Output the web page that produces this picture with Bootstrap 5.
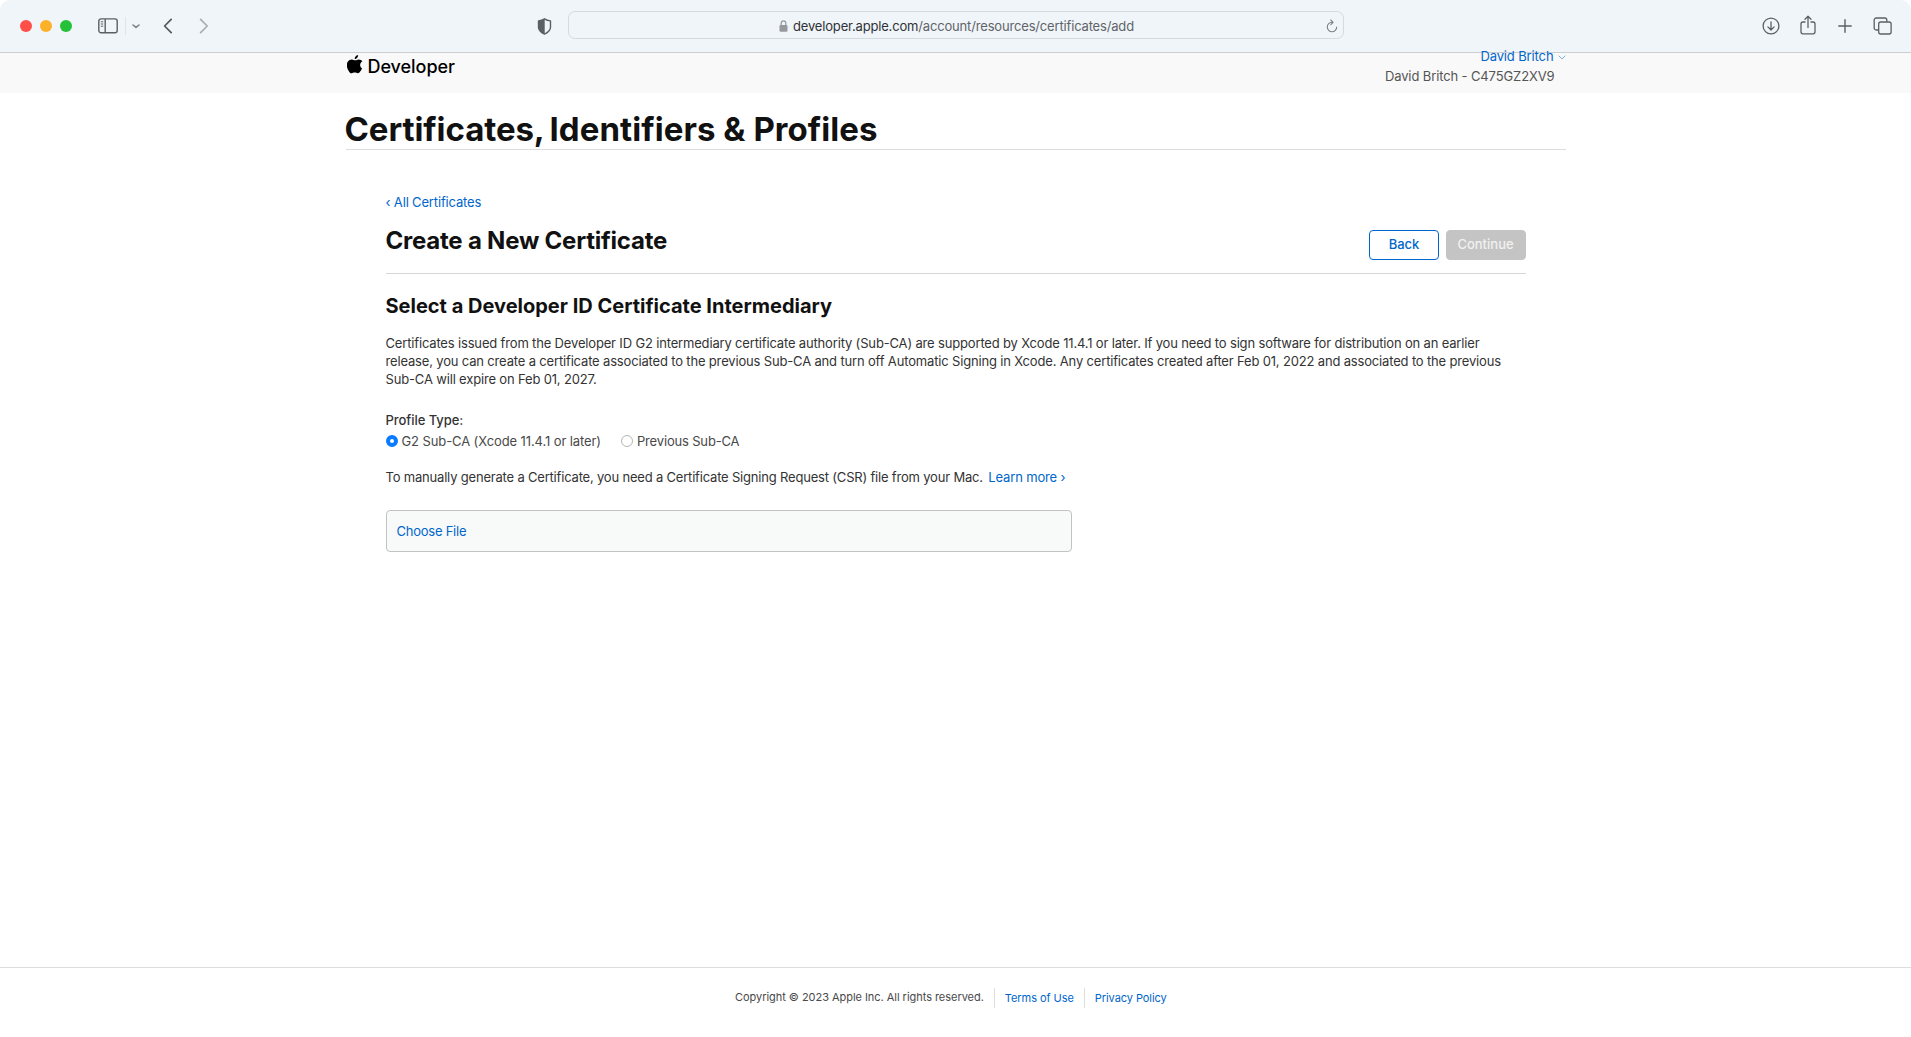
<!DOCTYPE html>
<html lang="en">
<head>
<meta charset="utf-8">
<meta name="viewport" content="width=device-width, initial-scale=1">
<title>Certificates, Identifiers &amp; Profiles</title>
<link href="https://cdn.jsdelivr.net/npm/bootstrap@5.3.0/dist/css/bootstrap.min.css" rel="stylesheet">
<style>
body{font-family:Inter,"Liberation Sans",sans-serif;font-size:13px;line-height:18px;letter-spacing:-.16px;color:#333;background:#fff;overflow:hidden}
svg{display:block;flex:none}
a{color:#06c;text-decoration:none}
.chrome{height:53px;background:#f0f5fa;border-bottom:1px solid #cbcdd0;border-radius:10px 10px 0 0;padding:0 19px 0 20px;color:#5b6065;display:grid;grid-template-columns:517px 15px 792px 1fr;align-items:center}
.tools-left{height:52px}
.light{width:12px;height:12px;border-radius:50%;margin-right:8px}
.light-red{background:#fe4f49}
.light-amber{background:#fdb128}
.light-green{background:#25c138}
.rule-v{width:1px;height:18px;background:#dfe4e9}
.address{height:28px;border:1px solid #d5dadf;border-radius:7px;margin-left:16px;margin-top:-2px;padding:0 5px 0 210px;color:#606468;letter-spacing:-.17px;line-height:26px}
.address b{font-weight:400;color:#2f3235}
.url{margin-left:5px;padding-top:2px}
.site-head{height:40px;background:#f9f9f9}
.wrap{width:1220px;margin:0 auto}
.brand-name{font-size:18px;font-weight:500;line-height:22px;letter-spacing:-.05px;color:#000;margin:1px 0 0 5px}
.account{margin-top:-7px;line-height:20px;color:#555;letter-spacing:-.12px}
.account-team{padding-right:11px}
.page-title{font-size:33px;line-height:40px;font-weight:700;letter-spacing:.06px;color:#111;padding-top:16px;margin:0 0 0 -1px}
.page-title span{letter-spacing:-.08px;word-spacing:-2px}
.main-rule{border-top:1px solid #ddd}
.panel{padding:43px 40px 0}
.head-row{margin-top:14px;height:49px;border-bottom:1px solid #d6d6d6}
.head-row h2{font-size:24px;line-height:30px;font-weight:700;letter-spacing:-.22px;color:#111;margin:1px 0 0}
.btn-act{height:30px;padding:0 0 1px;font-size:13px;line-height:27px;font-weight:500;border-radius:4px;margin-top:5px;letter-spacing:0}
.btn-back{width:70px;border:1px solid #06c;color:#06c;background:#fff;padding-left:1px}
.btn-next,.btn-next:disabled{width:80px;border:1px solid #c4c4c4;background:#c4c4c4;color:#f1f1f1;opacity:1}
.sub-title{font-size:20px;line-height:26px;font-weight:700;letter-spacing:0;color:#111;margin:19px 0 15px}
.intro{margin:0 0 23px;letter-spacing:-.164px}
.type-label{font-weight:500;letter-spacing:-.05px}
.choice{color:#494949;letter-spacing:-.1px;margin-top:3px}
.choice label:last-child{letter-spacing:-.17px}
.radio-dot.form-check-input{width:12px;height:12px;margin:0 4px 0 0;border:1px solid #b5b5b5;background:#fff;box-shadow:none;float:none}
.radio-dot.form-check-input:checked{border:4px solid #0a7aff;background:#fff}
.radio-dot.radio-second{margin-left:20px}
.csr{margin:18px 0 24px;letter-spacing:-.19px}
.csr a{letter-spacing:-.15px;margin-left:2px}
.drop{width:686px;height:42px;border:1px solid #c2c2c2;border-radius:4px;background:#f8faf9;padding-left:10px;letter-spacing:-.24px}
.foot{height:70px;border-top:1px solid #ddd;font-size:11px;line-height:18px;letter-spacing:-.04px;color:#494949;padding-left:735px;padding-top:20px}
.foot .rule-v{height:20px;background:#ddd}
.foot a{letter-spacing:-.06px;margin-top:1px}
</style>
<script src="https://cdn.jsdelivr.net/npm/bootstrap@5.3.0/dist/js/bootstrap.bundle.min.js"></script>
</head>
<body>
<div class="d-flex flex-column vh-100">
  <div class="chrome">
    <div class="tools-left d-flex align-items-center">
      <span class="light light-red"></span>
      <span class="light light-amber"></span>
      <span class="light light-green"></span>
      <svg style="margin-left:18px" width="20" height="16" viewBox="0 0 20 16" fill="none" stroke="#5b6065" stroke-width="1.4"><rect x=".8" y=".9" width="18.4" height="13.8" rx="2.2"/><path d="M7.2 1v13.6"/><path d="M2.8 3.8h2.4M2.8 6h2.4M2.8 8.2h2.4" stroke-width="1"/></svg>
      <span class="rule-v" style="margin-left:7px"></span>
      <svg style="margin-left:6px" width="8" height="5" viewBox="0 0 8 5" fill="none" stroke="#7d8287" stroke-width="1.6" stroke-linecap="round" stroke-linejoin="round"><path d="M1 1l3 2.4L7 1"/></svg>
      <svg style="margin-left:23px" width="10" height="16" viewBox="0 0 10 16" fill="none" stroke="#53585d" stroke-width="1.7" stroke-linecap="round" stroke-linejoin="round"><path d="M8.2 1.4L1.6 8l6.6 6.6"/></svg>
      <svg style="margin-left:26px" width="10" height="16" viewBox="0 0 10 16" fill="none" stroke="#a9adb2" stroke-width="1.7" stroke-linecap="round" stroke-linejoin="round"><path d="M1.6 1.4L8.2 8l-6.6 6.6"/></svg>
    </div>
    <svg width="15" height="17" viewBox="0 0 15 17"><path d="M7.5 .8C5.6 2 3.7 2.6 1.5 2.9v6.3c0 3.2 2.3 5.1 6 6.9 3.7-1.8 6-3.7 6-6.9V2.9C11.3 2.6 9.4 2 7.5 .8z" fill="none" stroke="#5b6065" stroke-width="1.4" stroke-linejoin="round"/><path d="M7.7 .8C5.6 2 3.7 2.6 1.5 2.9v6.3c0 3.2 2.3 5.1 6.2 6.9z" fill="#5b6065"/></svg>
    <div class="address d-flex align-items-center">
      <svg style="margin-top:2px" width="9" height="12" viewBox="0 0 9 12"><rect x=".5" y="5" width="8" height="6.8" rx="1.2" fill="#95999d"/><path d="M2.2 5.5V3.4a2.3 2.5 0 0 1 4.6 0v2.1" fill="none" stroke="#95999d" stroke-width="1.2"/></svg>
      <span class="url"><b>developer.apple.com</b>/account/resources/certificates/add</span>
      <svg class="ms-auto" style="margin-top:2px" width="12" height="14" viewBox="0 0 12 14" fill="none" stroke="#7d8185" stroke-width="1.1" stroke-linecap="round" stroke-linejoin="round"><path d="M6.5 3.3H6A4.7 4.7 0 1 0 10.7 8M4.8 1l2.3 2.3L4.8 5.6"/></svg>
    </div>
    <div class="d-flex align-items-center justify-content-end">
      <svg style="margin-right:20px" width="18" height="18" viewBox="0 0 18 18" fill="none" stroke="#5b6065" stroke-width="1.3" stroke-linecap="round" stroke-linejoin="round"><circle cx="9" cy="9" r="7.9"/><path d="M9 4.8v8M5.9 9.9L9 13l3.1-3.1"/></svg>
      <svg style="margin:-3px 22px 0 0" width="16" height="20" viewBox="0 0 16 20" fill="none" stroke="#5b6065" stroke-width="1.3" stroke-linecap="round" stroke-linejoin="round"><path d="M5 7H3a2 2 0 0 0-2 2v7.8a2 2 0 0 0 2 2h10a2 2 0 0 0 2-2V9a2 2 0 0 0-2-2h-2M8 12.5V1.4M5 4.2l3-3 3 3"/></svg>
      <svg style="margin-right:21px" width="14" height="14" viewBox="0 0 14 14" fill="none" stroke="#5b6065" stroke-width="1.4" stroke-linecap="round"><path d="M7 .8v12.4M.8 7h12.4"/></svg>
      <svg width="19" height="18" viewBox="0 0 19 18" fill="none" stroke="#5b6065" stroke-width="1.3" stroke-linejoin="round"><rect x="5.7" y="5" width="12.4" height="12" rx="2"/><path d="M5.5 13H3.2a2 2 0 0 1-2-2V3a2 2 0 0 1 2-2h8.6a2 2 0 0 1 2 2v1.8"/></svg>
    </div>
  </div>

  <header class="site-head">
    <div class="wrap d-flex justify-content-between align-items-start">
      <div class="d-flex align-items-start" style="padding-top:2px">
        <svg style="margin-left:1px" width="16" height="19" viewBox="0 0 16 19"><path d="M11.1.1c.1 1-.3 2-.9 2.700-.6.8-1.600 1.300-2.500 1.300-.1-1 .4-2 .9-2.600C9.200.700 10.300.200 11.100.100zM15 13.500c-.4 1-.7 1.500-1.200 2.300-.8 1.100-1.800 2.500-3.100 2.500-1.100 0-1.500-.7-3-.7s-1.900.7-3 .7c-1.300 0-2.200-1.200-3-2.400C-.5 12.700-.7 8.800.8 6.700c1-1.500 2.500-2.300 4-2.300 1.400 0 2.300.8 3.500.8s1.900-.8 3.500-.8c1.300 0 2.700.7 3.600 1.900-3.200 1.800-2.700 6.100-.4 7.200z" fill="#000"/></svg>
        <span class="brand-name">Developer</span>
      </div>
      <div class="account text-end">
        <div class="d-flex align-items-center justify-content-end"><a href="#">David Britch</a><svg style="margin:3px 0 0 4px" width="8" height="5" viewBox="0 0 8 5" fill="none" stroke="#7fb0e2" stroke-width="1"><path d="M.7.7L4 4l3.300-3.300"/></svg></div>
        <div class="account-team">David Britch - C475GZ2XV9</div>
      </div>
    </div>
  </header>

  <main class="wrap">
    <h1 class="page-title"><span>Certificates, </span>Identifiers &amp; Profiles</h1>
    <div class="main-rule"></div>
    <div class="panel">
      <a class="d-block" href="#">‹ All Certificates</a>
      <div class="head-row d-flex justify-content-between align-items-start">
        <h2>Create a New Certificate</h2>
        <div class="d-flex" style="gap:7px">
          <button class="btn btn-act btn-back" type="button">Back</button>
          <button class="btn btn-act btn-next" type="button" disabled>Continue</button>
        </div>
      </div>
      <h3 class="sub-title">Select a Developer ID Certificate Intermediary</h3>
      <p class="intro">Certificates issued from the Developer ID G2 intermediary certificate authority (Sub-CA) are supported by Xcode 11.4.1 or later. If you need to sign software for distribution on an earlier<br>release, you can create a certificate associated to the previous Sub-CA and turn off Automatic Signing in Xcode. Any certificates created after Feb 01, 2022 and associated to the previous<br>Sub-CA will expire on Feb 01, 2027.</p>
      <div class="type-label">Profile Type:</div>
      <div class="choice d-flex align-items-center">
        <input class="form-check-input radio-dot" type="radio" name="ca" id="g2" checked><label for="g2">G2 Sub-CA (Xcode 11.4.1 or later)</label>
        <input class="form-check-input radio-dot radio-second" type="radio" name="ca" id="prev"><label for="prev">Previous Sub-CA</label>
      </div>
      <p class="csr">To manually generate a Certificate, you need a Certificate Signing Request (CSR) file from your Mac. <a href="#">Learn more ›</a></p>
      <div class="drop d-flex align-items-center"><a href="#">Choose File</a></div>
    </div>
  </main>

  <footer class="foot mt-auto d-flex align-items-start">
    <span>Copyright © 2023 Apple Inc. All rights reserved.</span>
    <span class="rule-v" style="margin-left:10px"></span>
    <a href="#" style="margin-left:10px;margin-right:10px">Terms of Use</a>
    <span class="rule-v"></span>
    <a href="#" style="margin-left:10px">Privacy Policy</a>
  </footer>
</div>
</body>
</html>
